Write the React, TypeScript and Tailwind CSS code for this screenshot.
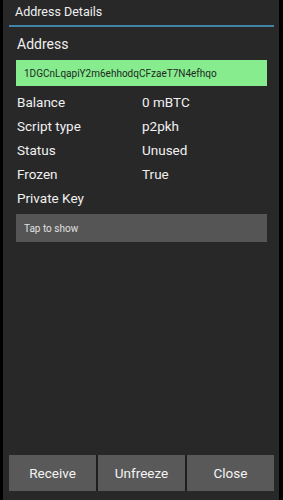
import React from "react";

const rows: [string, string][] = [
  ["Balance", "0 mBTC"],
  ["Script type", "p2pkh"],
  ["Status", "Unused"],
  ["Frozen", "True"],
  ["Private Key", ""],
];

export default function App() {
  return (
    <div
      className="w-[283px] h-[500px] bg-black pl-[3px] pr-[4px] flex"
      style={{ fontFamily: "Roboto, 'Noto Sans', sans-serif" }}
    >
      <div className="flex-1 bg-[#282828] flex flex-col pb-[9px]">
        <div className="h-[25px] pl-[12px] pt-[4px] text-[12.5px] leading-[16px] text-[#f0f0f0]">
          Address Details
        </div>
        <div className="ml-[6px] mr-[5px] h-[2px] bg-[#4284a6]" />
        <div className="pl-[13px] pr-[12px]">
          <div className="mt-[7px] h-[20px] pl-[1px] text-[14px] leading-[20px] text-[#f0f0f0]">
            Address
          </div>
          <div className="mt-[6px] h-[26px] bg-[#86ec8e] pl-[8px] flex items-center text-[10px] text-[#1e2a1e]">
            1DGCnLqapiY2m6ehhodqCFzaeT7N4efhqo
          </div>
          <div className="mt-[4px] flex flex-col">
            {rows.map(([k, v]) => (
              <div key={k} className="h-[24px] flex items-center text-[13.5px] text-[#f0f0f0]">
                <div className="w-[126px] pl-[1px]">{k}</div>
                <div>{v}</div>
              </div>
            ))}
          </div>
          <div className="mt-[4px] h-[28px] bg-[#555555] pl-[8px] flex items-center text-[10px] text-[#e0e0e0]">
            Tap to show
          </div>
        </div>
        <div className="mt-auto ml-[6px] mr-[5px] h-[36px] flex gap-[2px] bg-[#1e1e1e]">
          {["Receive", "Unfreeze", "Close"].map((b) => (
            <div
              key={b}
              className="flex-1 bg-[#595959] flex items-center justify-center text-[13.5px] text-[#f4f4f4]"
            >
              {b}
            </div>
          ))}
        </div>
      </div>
    </div>
  );
}
